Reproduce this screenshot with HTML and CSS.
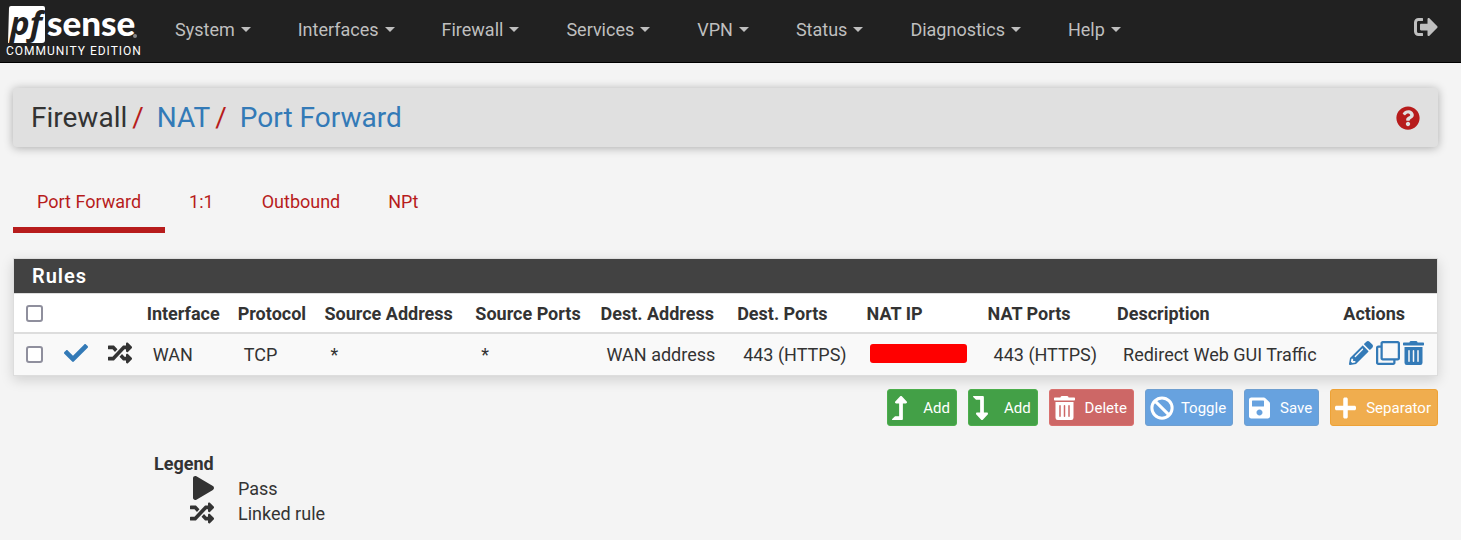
FILE: index.html
```html
<!DOCTYPE html>
<html lang="en">
<head>
<meta charset="utf-8">
<meta name="viewport" content="width=device-width, initial-scale=1">
<title>Firewall: NAT: Port Forward</title>
<link rel="stylesheet" href="styles.css">
</head>
<body>
<svg class="sprite" aria-hidden="true">
  <symbol id="random" viewBox="0 0 512 512"><path d="M504.971 359.029c9.373 9.373 9.373 24.569 0 33.941l-80 79.984c-15.01 15.01-40.971 4.49-40.971-16.971V416h-58.785a12.004 12.004 0 0 1-8.773-3.812l-70.556-75.596 53.333-57.143L352 336h32v-39.981c0-21.438 25.943-31.998 40.971-16.971l80 79.981zM12 176h84l52.781 56.551 53.333-57.143-70.556-75.596A11.999 11.999 0 0 0 122.785 96H12c-6.627 0-12 5.373-12 12v56c0 6.627 5.373 12 12 12zm372 0v39.984c0 21.46 25.961 31.98 40.971 16.971l80-79.984c9.373-9.373 9.373-24.569 0-33.941l-80-79.981C409.943 24.021 384 34.582 384 56.019V96h-58.785a12.004 12.004 0 0 0-8.773 3.812L96 336H12c-6.627 0-12 5.373-12 12v56c0 6.627 5.373 12 12 12h110.785c3.326 0 6.503-1.381 8.773-3.812L352 176h32z"/></symbol>
  <symbol id="trash" viewBox="0 0 448 512"><path d="M32 464a48 48 0 0 0 48 48h288a48 48 0 0 0 48-48V128H32zm272-256a16 16 0 0 1 32 0v224a16 16 0 0 1-32 0zm-96 0a16 16 0 0 1 32 0v224a16 16 0 0 1-32 0zm-96 0a16 16 0 0 1 32 0v224a16 16 0 0 1-32 0zM432 32H312l-9.400-18.700A24 24 0 0 0 281.100 0H166.800a23.720 23.720 0 0 0-21.400 13.300L136 32H16A16 16 0 0 0 0 48v32a16 16 0 0 0 16 16h416a16 16 0 0 0 16-16V48a16 16 0 0 0-16-16z"/></symbol>
</svg>

<header class="topbar">
  <a class="brand" href="#" aria-label="pfSense Community Edition">
    <svg class="brand-logo" viewBox="0 0 132 44">
      <path fill="#fff" d="M3 6H35Q37 6 37 8V40Q37 43 34 43H4L0 43 1 8Q1 6 3 6Z"/>
      <text class="brand-pf" x="2" y="35">pf</text>
      <text class="brand-sense" x="39" y="36">sense</text>
      <circle class="brand-dot" cx="127" cy="36" r="2"/>
    </svg>
    <span class="brand-edition">COMMUNITY EDITION</span>
  </a>
  <nav class="menu">
    <a href="#">System</a>
    <a href="#">Interfaces</a>
    <a href="#">Firewall</a>
    <a href="#">Services</a>
    <a href="#">VPN</a>
    <a href="#">Status</a>
    <a href="#">Diagnostics</a>
    <a href="#">Help</a>
  </nav>
  <a class="logout" href="#" aria-label="Logout"><svg class="icon" viewBox="0 0 512 512"><path d="M497 273L329 441c-15 15-41 4.500-41-17v-96H152c-13.300 0-24-10.700-24-24v-96c0-13.300 10.700-24 24-24h136V88c0-21.400 25.900-32 41-17l168 168c9.300 9.400 9.300 24.600 0 34zM192 436v-40c0-6.600-5.400-12-12-12H96c-17.700 0-32-14.300-32-32V160c0-17.700 14.300-32 32-32h84c6.600 0 12-5.400 12-12V76c0-6.600-5.400-12-12-12H96c-53 0-96 43-96 96v192c0 53 43 96 96 96h84c6.600 0 12-5.400 12-12z"/></svg></a>
</header>

<main class="page">
  <div class="heading">
    <ol class="crumbs">
      <li>Firewall</li>
      <li><a href="#">NAT</a></li>
      <li><a href="#">Port Forward</a></li>
    </ol>
    <a class="help" href="#" aria-label="Help for this page"><svg class="icon" viewBox="0 0 512 512"><path d="M504 256c0 136.997-111.043 248-248 248S8 392.997 8 256C8 119.083 119.043 8 256 8s248 111.083 248 248zM262.655 90c-54.497 0-89.255 22.957-116.549 63.758-3.536 5.286-2.353 12.415 2.715 16.258l34.699 26.310c5.205 3.947 12.621 3.008 16.665-2.122 17.864-22.658 30.113-35.797 57.303-35.797 20.429 0 45.698 13.148 45.698 32.958 0 14.976-12.363 22.667-32.534 33.976C247.128 238.528 216 254.941 216 296v4c0 6.627 5.373 12 12 12h56c6.627 0 12-5.373 12-12v-1.333c0-28.462 83.186-29.647 83.186-106.667 0-58.002-60.165-102-116.531-102zM256 338c-25.365 0-46 20.635-46 46 0 25.364 20.635 46 46 46s46-20.636 46-46c0-25.365-20.635-46-46-46z"/></svg></a>
  </div>

  <nav class="tabs">
    <a class="active" href="#">Port Forward</a>
    <a href="#">1:1</a>
    <a href="#">Outbound</a>
    <a href="#">NPt</a>
  </nav>

  <section class="panel">
    <h2 class="panel-title">Rules</h2>
    <table class="rules">
      <colgroup>
        <col class="c-check"><col class="c-state"><col class="c-link"><col class="c-iface"><col class="c-proto">
        <col class="c-saddr"><col class="c-sport"><col class="c-daddr"><col class="c-dport"><col class="c-natip">
        <col class="c-natport"><col class="c-descr"><col class="c-actions">
      </colgroup>
      <thead>
        <tr>
          <th class="tight"><input type="checkbox" aria-label="Select all rules"></th>
          <th></th>
          <th></th>
          <th>Interface</th>
          <th>Protocol</th>
          <th>Source Address</th>
          <th>Source Ports</th>
          <th>Dest. Address</th>
          <th>Dest. Ports</th>
          <th>NAT IP</th>
          <th>NAT Ports</th>
          <th>Description</th>
          <th>Actions</th>
        </tr>
      </thead>
      <tbody>
        <tr>
          <td class="tight"><input type="checkbox" aria-label="Select rule"></td>
          <td class="mark"><a href="#" aria-label="Enabled"><svg class="icon" viewBox="0 0 512 512"><path d="M173.898 439.404l-166.400-166.400c-9.997-9.997-9.997-26.206 0-36.204l36.203-36.204c9.997-9.998 26.207-9.998 36.204 0L192 312.690 432.095 72.596c9.997-9.997 26.207-9.997 36.204 0l36.203 36.204c9.997 9.997 9.997 26.206 0 36.204l-294.400 294.401c-9.998 9.997-26.207 9.997-36.204-.001z"/></svg></a></td>
          <td class="mark"><svg class="icon"><use href="#random"/></svg></td>
          <td>WAN</td>
          <td>TCP</td>
          <td>*</td>
          <td>*</td>
          <td>WAN address</td>
          <td>443 (HTTPS)</td>
          <td class="mark"><span class="redacted"></span></td>
          <td>443 (HTTPS)</td>
          <td>Redirect Web GUI Traffic</td>
          <td class="mark">
            <div class="row-actions">
              <a href="#" aria-label="Edit"><svg class="icon" viewBox="0 0 512 512"><path d="M497.900 142.100l-46.100 46.100c-4.700 4.700-12.300 4.700-17 0l-111-111c-4.700-4.700-4.700-12.300 0-17l46.100-46.100c18.700-18.700 49.100-18.700 67.900 0l60.100 60.100c18.800 18.700 18.800 49.100 0 67.900zM284.200 99.800L21.600 362.400.4 483.900c-2.900 16.400 11.400 30.600 27.800 27.800l121.500-21.300 262.600-262.600c4.700-4.700 4.700-12.300 0-17l-111-111c-4.800-4.700-12.400-4.700-17.100 0zM124.100 339.900c-5.500-5.500-5.500-14.300 0-19.800l154-154c5.500-5.500 14.300-5.500 19.800 0s5.500 14.300 0 19.800l-154 154c-5.500 5.500-14.300 5.500-19.800 0zM88 424h48v36.300l-64.500 11.300-31.100-31.100L51.700 376H88v48z"/></svg></a>
              <a href="#" aria-label="Copy"><svg class="icon" viewBox="0 0 512 512"><path d="M464 0H144c-26.510 0-48 21.490-48 48v48H48c-26.510 0-48 21.490-48 48v320c0 26.510 21.490 48 48 48h320c26.510 0 48-21.490 48-48v-48h48c26.510 0 48-21.490 48-48V48c0-26.510-21.490-48-48-48zM362 464H54a6 6 0 0 1-6-6V150a6 6 0 0 1 6-6h42v224c0 26.510 21.490 48 48 48h224v42a6 6 0 0 1-6 6zm96-96H150a6 6 0 0 1-6-6V54a6 6 0 0 1 6-6h308a6 6 0 0 1 6 6v308a6 6 0 0 1-6 6z"/></svg></a>
              <a href="#" aria-label="Delete rule"><svg class="icon narrow"><use href="#trash"/></svg></a>
            </div>
          </td>
        </tr>
      </tbody>
    </table>
  </section>

  <div class="buttons">
    <button class="btn green" type="button"><svg class="icon slim" viewBox="0 0 320 512"><path d="M313.553 119.669L209.587 7.666c-9.485-10.214-25.676-10.229-35.174 0L70.438 119.669C56.232 134.969 67.062 160 88.025 160H152v272H68.024a11.996 11.996 0 0 0-8.485 3.515l-56 56C-4.021 499.074 1.333 512 12.024 512H208c13.255 0 24-10.745 24-24V160h63.966c20.878 0 31.851-24.969 17.587-40.331z"/></svg>Add</button>
    <button class="btn green" type="button"><svg class="icon slim" viewBox="0 0 320 512"><path d="M313.553 392.331L209.587 504.334c-9.485 10.214-25.676 10.229-35.174 0L70.438 392.331C56.232 377.031 67.062 352 88.025 352H152V80H68.024a11.996 11.996 0 0 1-8.485-3.515l-56-56C-4.021 12.926 1.333 0 12.024 0H208c13.255 0 24 10.745 24 24v328h63.966c20.878 0 31.851 24.969 17.587 40.331z"/></svg>Add</button>
    <button class="btn red" type="button"><svg class="icon narrow"><use href="#trash"/></svg>Delete</button>
    <button class="btn blue" type="button"><svg class="icon" viewBox="0 0 512 512"><path fill="none" stroke="currentColor" stroke-width="64" d="M256 40a216 216 0 1 0 0 432a216 216 0 1 0 0-432zM103 103L409 409"/></svg>Toggle</button>
    <button class="btn blue" type="button"><svg class="icon narrow" viewBox="0 0 448 512"><path d="M433.941 129.941l-83.882-83.882A48 48 0 0 0 316.118 32H48C21.490 32 0 53.490 0 80v352c0 26.510 21.490 48 48 48h352c26.510 0 48-21.490 48-48V163.882a48 48 0 0 0-14.059-33.941zM224 416c-35.346 0-64-28.654-64-64 0-35.346 28.654-64 64-64s64 28.654 64 64c0 35.346-28.654 64-64 64zm96-304.520V212c0 6.627-5.373 12-12 12H76c-6.627 0-12-5.373-12-12V108c0-6.627 5.373-12 12-12h228.520c3.183 0 6.235 1.264 8.485 3.515l3.480 3.480A11.996 11.996 0 0 1 320 111.480z"/></svg>Save</button>
    <button class="btn orange" type="button"><svg class="icon narrow" viewBox="0 0 448 512"><path d="M416 208H272V64c0-17.670-14.330-32-32-32h-32c-17.670 0-32 14.330-32 32v144H32c-17.670 0-32 14.330-32 32v32c0 17.670 14.330 32 32 32h144v144c0 17.670 14.330 32 32 32h32c17.670 0 32-14.330 32-32V304h144c17.670 0 32-14.330 32-32v-32c0-17.670-14.330-32-32-32z"/></svg>Separator</button>
  </div>

  <dl class="legend">
    <dt class="legend-title">Legend</dt>
    <dt><svg class="icon narrow" viewBox="0 0 448 512"><path d="M424.400 214.700L72.400 6.600C43.800-10.300 0 6.100 0 47.900V464c0 37.500 40.700 60.100 72.400 41.300l352-208c31.400-18.500 31.500-64.100 0-82.600z"/></svg></dt>
    <dd>Pass</dd>
    <dt><svg class="icon"><use href="#random"/></svg></dt>
    <dd>Linked rule</dd>
  </dl>
</main>
</body>
</html>
```
FILE: styles.css
```css
* { box-sizing: border-box; }

body {
  margin: 0;
  background: #f4f4f4;
  color: #333;
  font: 18px/25px Roboto, sans-serif;
}

a { color: #337ab7; text-decoration: none; }

.sprite { display: none; }

.icon {
  display: block;
  width: 24px;
  height: 24px;
  fill: currentColor;
}
.icon.narrow { width: 21px; }
.icon.slim { width: 15px; }

/* Top bar */
.topbar {
  display: flex;
  align-items: center;
  height: 63px;
  padding: 0 23px 4px 6px;
  background: #212121;
  border-bottom: 1px solid #000;
}
.brand { width: 169px; color: #fff; }
.brand-logo {
  display: block;
  width: 132px;
  height: 44px;
  margin-left: 2px;
  overflow: visible;
}
.brand-pf { font: italic 700 33px "Open Sans", sans-serif; fill: #212121; }
.brand-sense { font: 900 35px Lato, sans-serif; fill: #fff; }
.brand-dot { fill: #888; }
.brand-edition {
  display: block;
  font-size: 12px;
  line-height: 14px;
  letter-spacing: 1px;
  white-space: nowrap;
}
.menu { display: flex; flex: 1; gap: 47px; }
.menu a {
  display: flex;
  align-items: center;
  gap: 6px;
  color: #bfbfbf;
  white-space: nowrap;
}
.menu a::after {
  content: "";
  border: 5px solid transparent;
  border-top-color: currentColor;
  border-bottom: 0;
}
.logout { color: #bfbfbf; padding-bottom: 4px; }

/* Page */
.page { padding: 25px 23px 0 13px; }

.heading {
  display: flex;
  align-items: center;
  justify-content: space-between;
  height: 59px;
  padding: 0 18px;
  background: #e0e0e0;
  border-radius: 4px;
  box-shadow: 0 1px 10px rgba(0, 0, 0, .3);
}
.crumbs {
  display: flex;
  margin: 0;
  padding: 0;
  list-style: none;
  font-size: 28px;
  line-height: 36px;
}
.crumbs li + li::before {
  content: "/";
  margin: 0 13px 0 5px;
  color: #b71c1c;
}
.help { color: #b71c1c; }

.tabs { display: flex; margin-top: 37px; }
.tabs a {
  padding: 5px 24px 13px;
  border-bottom: 6px solid transparent;
  color: #b71c1c;
}
.tabs .active { border-color: #b71c1c; }

/* Rules table */
.panel {
  margin-top: 25px;
  background: #fff;
  border: 1px solid #ddd;
  box-shadow: 0 4px 12px rgba(0, 0, 0, .15);
}
.panel-title {
  margin: 0;
  padding: 5px 18px 4px;
  background: #424242;
  color: #fff;
  font-size: 20px;
  line-height: 25px;
  font-weight: 600;
  letter-spacing: 1px;
}
.rules {
  width: 100%;
  table-layout: fixed;
  border-collapse: collapse;
  border-top: 1px solid #ddd;
}
.rules th, .rules td {
  text-align: left;
  white-space: nowrap;
  vertical-align: middle;
}
.rules th { padding: 7px 6px 6px; font-weight: 700; }
.rules td { padding: 8px 12px; background: #f9f9f9; border-top: 2px solid #ddd; }
.rules td.mark { padding: 0 6px 3px; }
.rules .tight { padding: 0 0 0 12px; }

.c-check { width: 3.1%; }
.c-state { width: 3.1%; }
.c-link { width: 2.7%; }
.c-iface { width: 6.4%; }
.c-proto { width: 6.1%; }
.c-saddr { width: 10.6%; }
.c-sport { width: 8.8%; }
.c-daddr { width: 9.6%; }
.c-dport { width: 9.1%; }
.c-natip { width: 8.5%; }
.c-natport { width: 9.1%; }
.c-descr { width: 15.9%; }
.c-actions { width: 7%; }

input[type="checkbox"] {
  appearance: none;
  display: block;
  width: 17px;
  height: 17px;
  margin: 0;
  background: #fff;
  border: 2px solid #8f8f9d;
  border-radius: 3px;
}
.redacted {
  display: block;
  width: 97px;
  height: 19px;
  margin-left: 3px;
  background: #f00;
  border-radius: 3px;
}
.row-actions { display: flex; gap: 3px; padding-left: 6px; }

/* Buttons */
.buttons {
  display: flex;
  justify-content: flex-end;
  gap: 11px;
  margin-top: 13px;
}
.btn {
  display: flex;
  align-items: center;
  gap: 7px;
  height: 37px;
  padding: 0 6px 0 4px;
  border: 1px solid;
  border-radius: 3px;
  color: #fff;
  font: 15px/22px Roboto, sans-serif;
}
.btn .narrow { margin-right: 3px; }
.btn .slim { margin-right: 9px; }
.green { background: #43a047; border-color: #4cae4c; }
.red { background: #cd6766; border-color: #d9706e; }
.blue { background: #67a2df; border-color: #6f9fd0; }
.orange { background: #f0ad4e; border-color: #eea236; }

/* Legend */
.legend {
  display: grid;
  grid-template-columns: 60px auto;
  column-gap: 24px;
  margin: 25px 0 0 141px;
}
.legend dt { display: flex; justify-content: flex-end; height: 25px; }
.legend dd { margin: 0; }
.legend .legend-title { grid-column: 1 / -1; justify-content: flex-start; font-weight: 700; }
```
